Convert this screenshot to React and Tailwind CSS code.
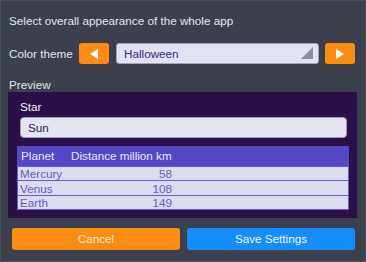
const planets = [
  { name: 'Mercury', distance: 58, h: 'h-[14px]' },
  { name: 'Venus', distance: 108, h: 'h-[15px]' },
  { name: 'Earth', distance: 149, h: 'h-[14px]' },
];

function ArrowButton({ dir }) {
  return (
    <button className="flex h-[21px] w-[30px] items-center justify-center rounded-[3px] bg-[#fd8c12]">
      <svg width="8" height="10" viewBox="0 0 8 10">
        {dir === 'left' ? (
          <polygon points="8,0 8,10 0,5" fill="#ffffff" />
        ) : (
          <polygon points="0,0 0,10 8,5" fill="#ffffff" />
        )}
      </svg>
    </button>
  );
}

export default function App() {
  return (
    <div
      className="flex h-[262px] w-[366px] flex-col border border-[#4b4f59] bg-[#3b404c] text-[11.7px] text-[#e4e5ea]"
      style={{ fontFamily: '"Liberation Sans", Arial, sans-serif' }}
    >
      <div className="mt-[12px] h-[15px] pl-[8px] leading-[15px]">
        Select overall appearance of the whole app
      </div>

      {/* Theme picker row */}
      <div className="mt-[15px] flex h-[21px] items-center pl-[8px]">
        <span className="w-[70px]">Color theme</span>
        <ArrowButton dir="left" />
        <div className="relative ml-[7px] flex h-[21px] w-[203px] items-center rounded-[3px] border border-[#a3a3b8] bg-[#e2e2f4] pl-[7px] text-[#3a2a88]">
          Halloween
          <svg className="absolute bottom-[4px] right-[5px]" width="12" height="12" viewBox="0 0 12 12">
            <polygon points="0,12 12,12 12,0" fill="#8a9098" />
          </svg>
        </div>
        <div className="ml-[6px]">
          <ArrowButton dir="right" />
        </div>
      </div>

      <div className="mt-[14px] h-[14px] pl-[8px] leading-[14px]">Preview</div>

      {/* Preview panel */}
      <div className="ml-[7px] flex w-[349px] flex-col bg-[#2a1046] pb-[8px] pt-[8px]">
        <div className="h-[14px] pl-[12px] leading-[14px] text-[#f0eef6]">Star</div>
        <div className="ml-[12px] mt-[3px] flex h-[21px] w-[327px] items-center rounded-[4px] border border-[#9c9cb2] bg-[#e4e4f4] pl-[7px] text-[#2a2060]">
          Sun
        </div>

        <div className="ml-[9px] mt-[8px] w-[332px]">
          <div className="flex h-[20px] items-center bg-[#5547c6] text-[#e8e8f8]">
            <span className="w-[50px] pl-[4px]">Planet</span>
            <span className="w-[108px] pl-[4px]">Distance million km</span>
          </div>
          {planets.map((p) => (
            <div
              key={p.name}
              className={`flex ${p.h} items-center border-x border-t border-[#6b5bd0] bg-[#dcdcf0] leading-[13px] text-[#6a58c6]`}
            >
              <span className="w-[49px] pl-[2px]">{p.name}</span>
              <span className="w-[108px] pr-[3px] text-right">{p.distance}</span>
            </div>
          ))}
          <div className="h-px bg-[#6b5bd0]" />
        </div>
      </div>

      {/* Actions */}
      <div className="mt-[10px] flex gap-[7px] pl-[11px]">
        <button className="h-[22px] w-[168px] rounded-[3px] bg-[#fd8c12] text-[#fbe9d6]">
          Cancel
        </button>
        <button className="h-[22px] w-[168px] rounded-[3px] bg-[#168dfc] text-[#f2f6ff]">
          Save Settings
        </button>
      </div>
    </div>
  );
}
